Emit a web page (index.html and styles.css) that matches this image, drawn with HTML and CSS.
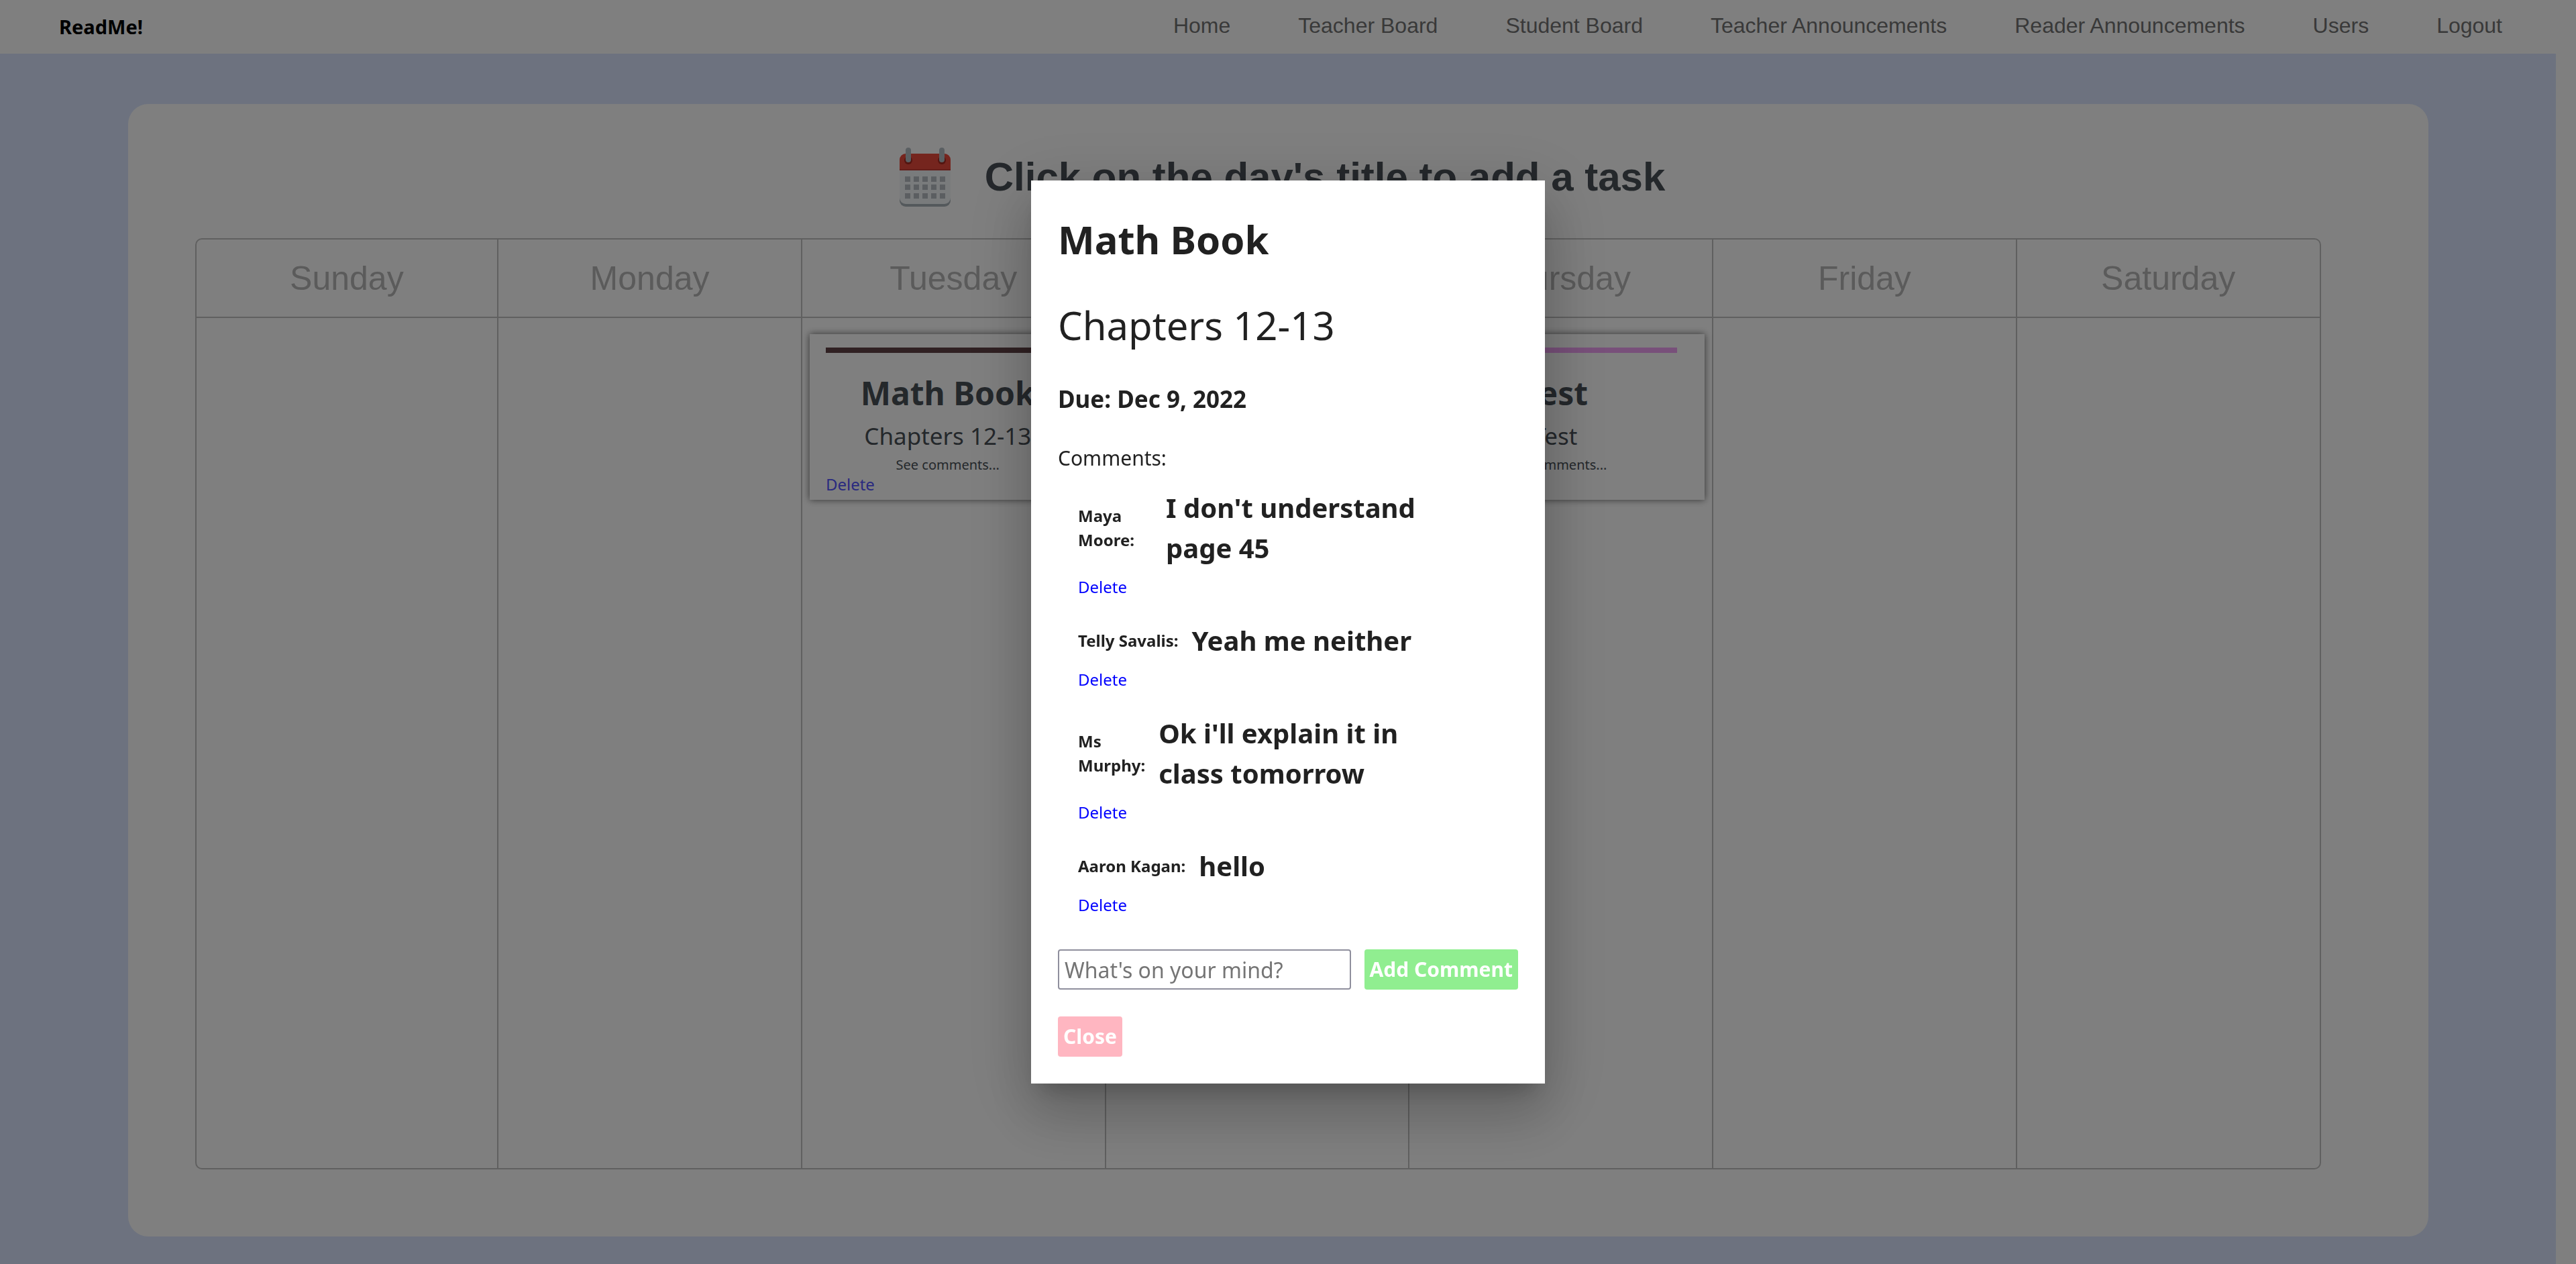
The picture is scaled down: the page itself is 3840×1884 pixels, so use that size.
FILE: index.html
```html
<!DOCTYPE html>
<html lang="en">
<head>
<meta charset="utf-8">
<title>ReadMe!</title>
<link rel="stylesheet" href="styles.css">
</head>
<body>
<div class="page">
  <header class="site-header">
    <a class="logo" href="#">ReadMe!</a>
    <nav class="nav">
      <a href="#">Home</a>
      <a href="#">Teacher Board</a>
      <a href="#">Student Board</a>
      <a href="#">Teacher Announcements</a>
      <a href="#">Reader Announcements</a>
      <a href="#">Users</a>
      <a href="#">Logout</a>
    </nav>
  </header>

  <main class="main">
    <section class="board">
      <div class="board-title">
        <svg class="calendar-icon" viewBox="0 0 90 90" aria-hidden="true">
          <path d="M7 34h76v46a9 9 0 0 1-9 9H16a9 9 0 0 1-9-9z" fill="#a9b2b8"/>
          <path d="M7 34h76v42a9 9 0 0 1-9 9H16a9 9 0 0 1-9-9z" fill="#f2f6f8"/>
          <path d="M7 35V19a9 9 0 0 1 9-9h58a9 9 0 0 1 9 9v16z" fill="#ea4a3d"/>
          <path d="M7 33h76v2H7z" fill="#c63a30"/>
          <circle cx="20" cy="20" r="6" fill="#a82a20"/>
          <circle cx="70" cy="20" r="6" fill="#a82a20"/>
          <path d="M20 5v14M70 5v14" stroke="#b4bfc5" stroke-width="8" stroke-linecap="round"/>
          <path d="M15 48h60M15 60h60M15 73h60" stroke="#b6bdc3" stroke-width="8" stroke-dasharray="8 5"/>
        </svg>
        <h1>Click on the day's title to add a task</h1>
      </div>

      <div class="calendar">
        <section class="day"><h2>Sunday</h2><div class="tasks"></div></section>
        <section class="day"><h2>Monday</h2><div class="tasks"></div></section>
        <section class="day"><h2>Tuesday</h2>
          <div class="tasks">
            <article class="task task-math">
              <h3>Math Book</h3>
              <p class="task-detail">Chapters 12-13</p>
              <p class="task-more">See comments...</p>
              <a class="task-delete" href="#">Delete</a>
            </article>
          </div>
        </section>
        <section class="day"><h2>Wednesday</h2><div class="tasks"></div></section>
        <section class="day"><h2>Thursday</h2>
          <div class="tasks">
            <article class="task task-test">
              <h3>Test</h3>
              <p class="task-detail">Test</p>
              <p class="task-more">See comments...</p>
            </article>
          </div>
        </section>
        <section class="day"><h2>Friday</h2><div class="tasks"></div></section>
        <section class="day"><h2>Saturday</h2><div class="tasks"></div></section>
      </div>
    </section>
  </main>
</div>

<div class="overlay">
  <div class="modal" role="dialog" aria-modal="true" aria-labelledby="modal-title">
    <h2 class="modal-title" id="modal-title">Math Book</h2>
    <p class="modal-detail">Chapters 12-13</p>
    <p class="modal-due">Due: Dec 9, 2022</p>
    <p class="modal-label">Comments:</p>
    <ul class="comments">
      <li>
        <div class="comment-row"><span class="author">Maya Moore:</span><span class="comment">I don't understand page 45</span></div>
        <a class="comment-delete" href="#">Delete</a>
      </li>
      <li>
        <div class="comment-row"><span class="author">Telly Savalis:</span><span class="comment">Yeah me neither</span></div>
        <a class="comment-delete" href="#">Delete</a>
      </li>
      <li>
        <div class="comment-row"><span class="author">Ms Murphy:</span><span class="comment">Ok i'll explain it in class tomorrow</span></div>
        <a class="comment-delete" href="#">Delete</a>
      </li>
      <li>
        <div class="comment-row"><span class="author">Aaron Kagan:</span><span class="comment">hello</span></div>
        <a class="comment-delete" href="#">Delete</a>
      </li>
    </ul>
    <form class="comment-form">
      <input type="text" aria-label="Comment" placeholder="What's on your mind?">
      <button class="btn btn-add" type="button">Add Comment</button>
    </form>
    <button class="btn btn-close" type="button">Close</button>
  </div>
</div>
</body>
</html>
```
FILE: styles.css
```css
* {
  box-sizing: border-box;
  margin: 0;
  padding: 0;
}

body {
  background: #fff;
  font-family: "Liberation Sans", Arial, sans-serif;
}

a {
  text-decoration: none;
}

.page {
  display: flex;
  flex-direction: column;
  min-height: 100vh;
  margin-right: 30px;
}

/* Header */
.site-header {
  display: flex;
  align-items: center;
  justify-content: space-between;
  height: 80px;
  padding: 0 80px 0 88px;
}

.logo {
  font: 700 29px/40px "Noto Sans", sans-serif;
  color: #000;
}

.nav {
  display: flex;
  gap: 101px;
  padding-bottom: 4px;
}

.nav a {
  font-size: 32px;
  line-height: 48px;
  color: #727272;
}

/* Board */
.main {
  flex: 1;
  display: flex;
  padding: 75px 5% 41px;
  background: #dae5fe;
}

.board {
  flex: 1;
  display: flex;
  flex-direction: column;
  padding: 64px 100px 100px;
  background: #fff;
  border-radius: 30px;
}

.board-title {
  display: flex;
  align-items: center;
  justify-content: center;
  gap: 44px;
  margin-bottom: 46px;
  padding-left: 6px;
}

.calendar-icon {
  width: 90px;
  height: 90px;
}

.board-title h1 {
  font-size: 60px;
  line-height: 72px;
  color: #495057;
}

.calendar {
  flex: 1;
  display: grid;
  grid-template-columns: repeat(7, 1fr);
  margin-right: 60px;
}

.day {
  display: flex;
  flex-direction: column;
  min-width: 0;
  border: 2px solid #c0c0c0;
  border-left-width: 0;
}

.day:first-child {
  border-left-width: 2px;
  border-radius: 10px 0 0 10px;
}

.day:last-child {
  border-radius: 0 10px 10px 0;
}

.day h2 {
  padding: 29px 0 28px;
  border-bottom: 2px solid #c0c0c0;
  font-size: 50px;
  font-weight: 400;
  line-height: 58px;
  text-align: center;
  color: #b6b6b6;
}

.tasks {
  padding: 24px 11px;
}

.task {
  min-height: 247px;
  padding: 20px 41px 9px 24px;
  box-shadow: 0 0 10px rgba(0, 0, 0, 0.6);
  font-family: "Noto Sans", sans-serif;
  text-align: center;
  color: #495057;
}

.task::before {
  content: "";
  display: block;
  height: 8px;
  margin-bottom: 24px;
}

.task-math::before {
  background: #604246;
}

.task-test::before {
  background: #f0a0f4;
}

.task h3 {
  font-size: 48px;
  line-height: 72px;
}

.task-detail {
  font-size: 35px;
  line-height: 56px;
}

.task-more {
  font-size: 20px;
  line-height: 30px;
}

.task-delete {
  display: block;
  font-size: 24px;
  line-height: 28px;
  text-align: left;
  color: #5555ff;
}

/* Task modal */
.overlay {
  position: fixed;
  inset: 0;
  display: flex;
  align-items: center;
  justify-content: center;
  background: rgba(0, 0, 0, 0.5);
}

.modal {
  width: 766px;
  max-width: 100%;
  padding: 40px;
  background: #fff;
  box-shadow: 0 22px 30px -14px rgba(0, 0, 0, 0.2),
    0 48px 76px 6px rgba(0, 0, 0, 0.14),
    0 18px 92px 16px rgba(0, 0, 0, 0.12);
  font-family: "Noto Sans", sans-serif;
  color: #212121;
}

.modal-title,
.modal-detail {
  margin-bottom: 32px;
  font-size: 58px;
  line-height: 96px;
}

.modal-due {
  margin: 38px 0 40px;
  font-size: 35px;
  font-weight: 700;
  line-height: 48px;
}

.modal-label {
  margin-bottom: 20px;
  font-size: 30px;
  line-height: 48px;
}

.comments {
  display: grid;
  gap: 32px;
  width: 75%;
  margin: 0 0 48px 30px;
  list-style: none;
}

.comment-row {
  display: flex;
  align-items: center;
  gap: 20px;
  margin-bottom: 10px;
}

.author {
  font-size: 24px;
  font-weight: 700;
  line-height: 36px;
}

.comment {
  font-size: 40px;
  font-weight: 700;
  line-height: 60px;
}

.comment-delete {
  display: block;
  font-size: 24px;
  line-height: 36px;
  color: #00f;
}

.comment-form {
  display: flex;
  gap: 20px;
  margin-bottom: 40px;
}

.comment-form input {
  flex: 1;
  min-width: 0;
  height: 60px;
  padding: 0 8px;
  border: 2px solid #8f8f9d;
  border-radius: 4px;
  background: #fff;
  font: 400 32px/48px "Noto Sans", sans-serif;
}

.comment-form input::placeholder {
  color: #757575;
}

.btn {
  padding: 6px 8px;
  border: 0;
  border-radius: 4px;
  font: 700 30px/48px "Noto Sans", sans-serif;
  color: #fff;
}

.btn-add {
  background: lightgreen;
}

.btn-close {
  display: block;
  background: lightpink;
}
```
